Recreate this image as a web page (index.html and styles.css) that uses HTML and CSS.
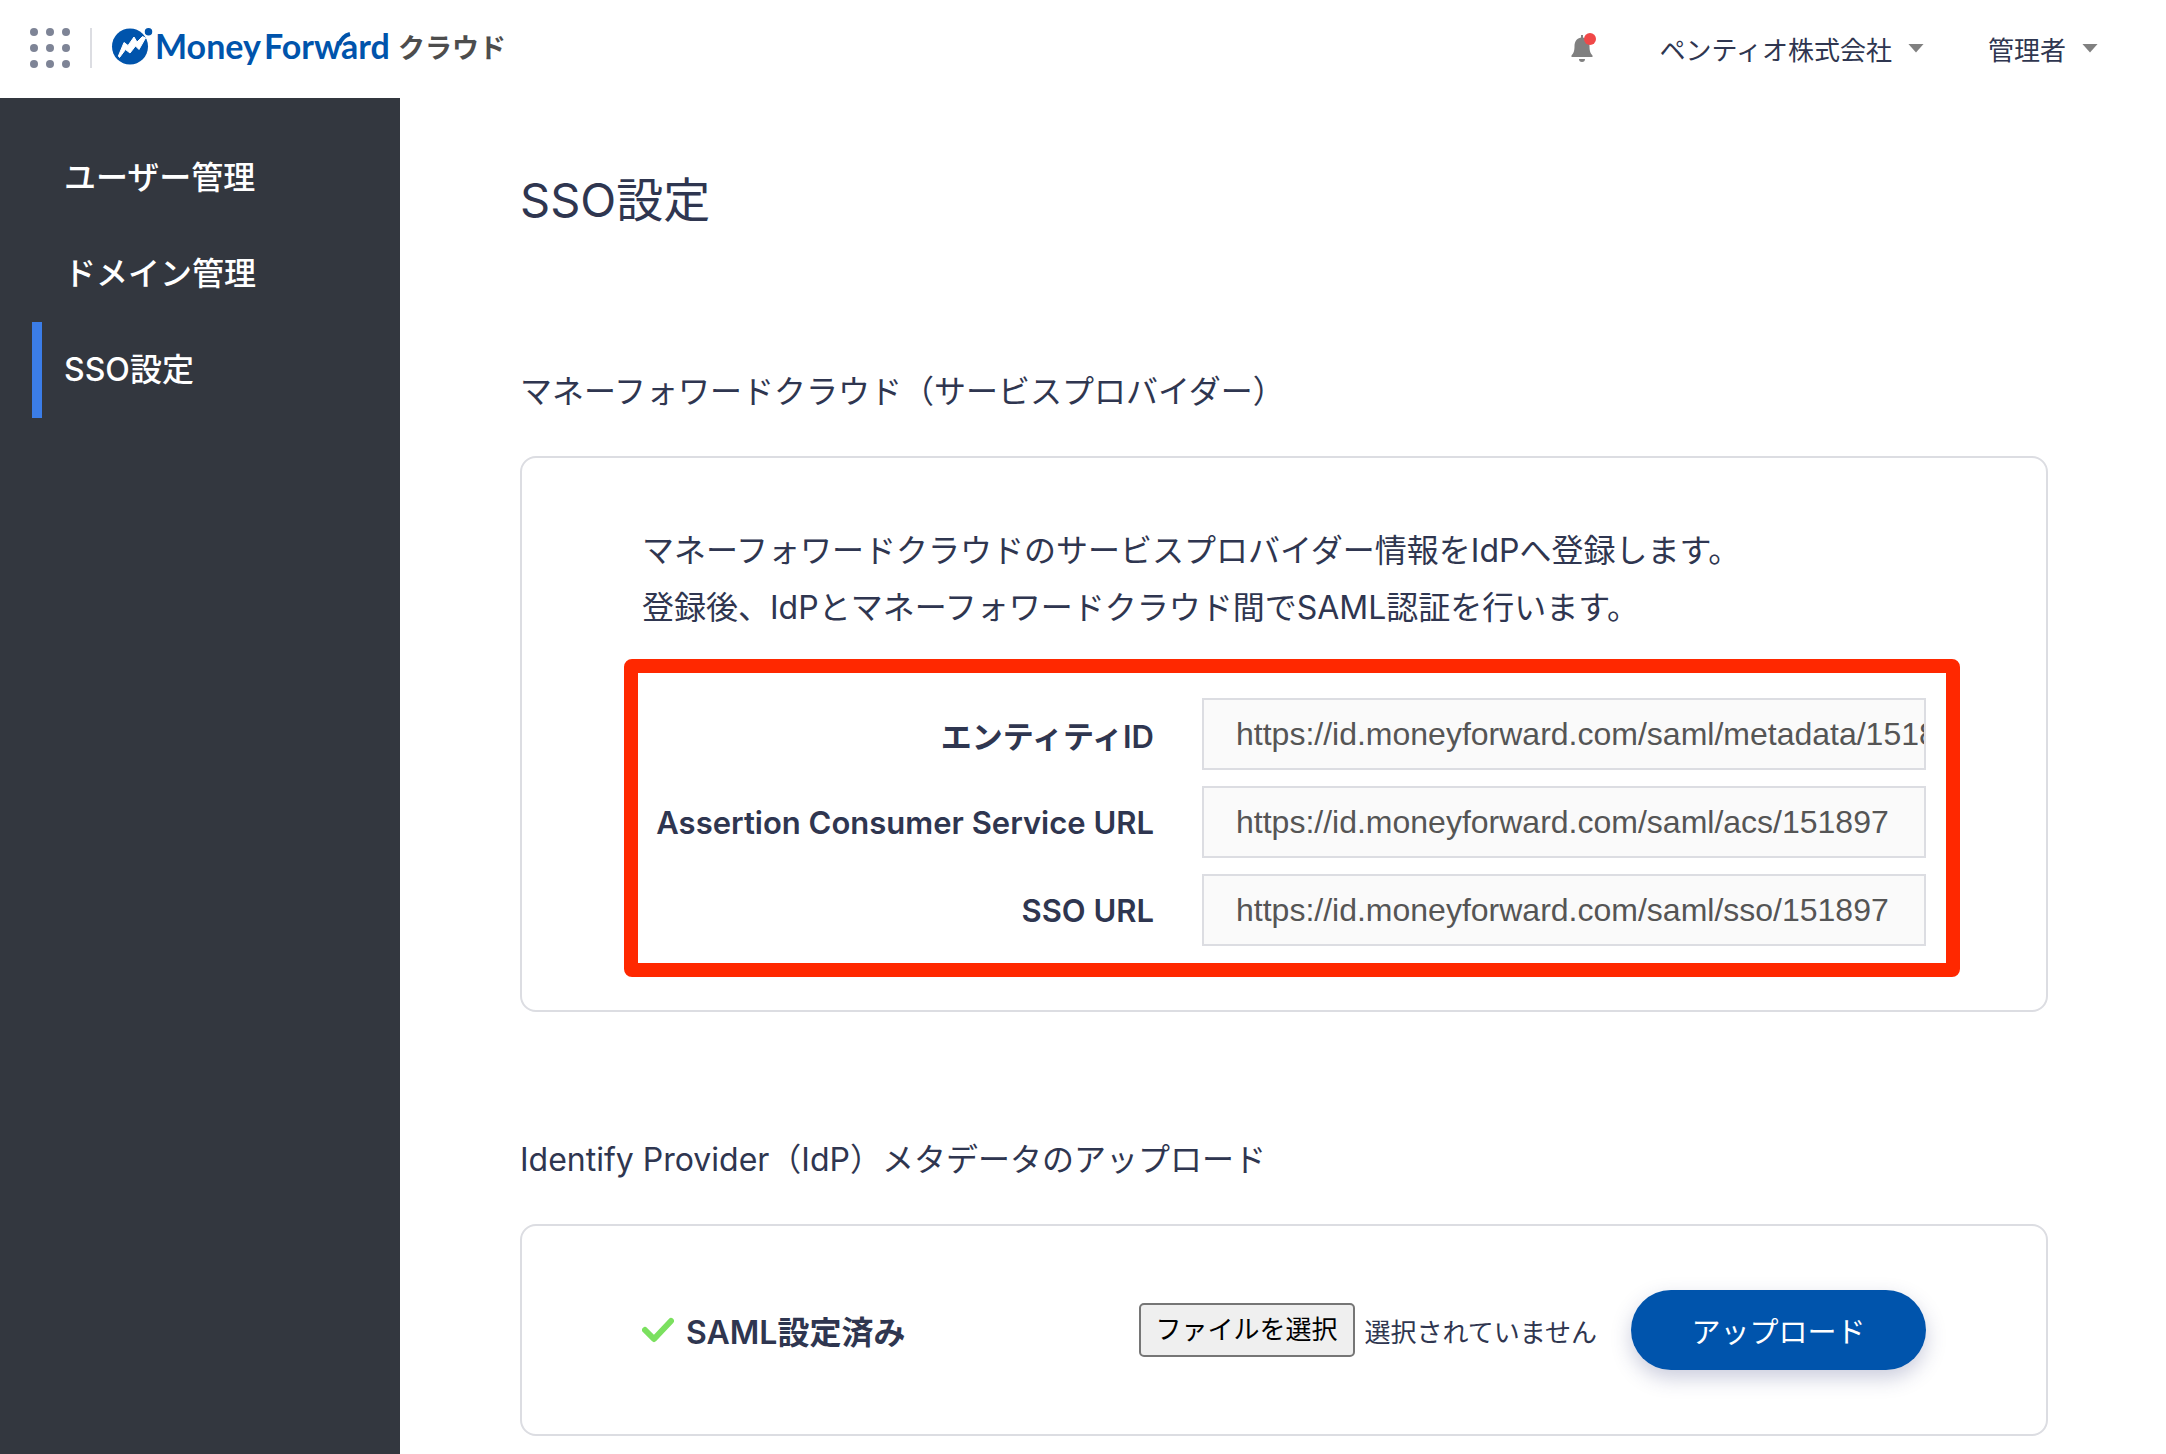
FILE: index.html
```
<!DOCTYPE html>
<html lang="ja">

<head>
  <meta charset="UTF-8">
  <meta name="viewport" content="width=device-width, initial-scale=1.0">
  <title>SSO設定</title>
  <link rel="stylesheet" href="styles.css">
</head>

<body>
  <header class="header">
    <button class="apps" type="button" aria-label="サービス一覧">
      <svg width="40" height="40" viewBox="0 0 40 40" fill="#7e8496">
        <circle cx="4" cy="4" r="4" /><circle cx="20" cy="4" r="4" /><circle cx="36" cy="4" r="4" />
        <circle cx="4" cy="20" r="4" /><circle cx="20" cy="20" r="4" /><circle cx="36" cy="20" r="4" />
        <circle cx="4" cy="36" r="4" /><circle cx="20" cy="36" r="4" /><circle cx="36" cy="36" r="4" />
      </svg>
    </button>
    <a class="logo" href="#">
      <svg width="392" height="40" viewBox="0 0 392 40">
        <circle cx="18" cy="18.500" r="18" fill="#0054ac" />
        <circle cx="36.500" cy="3.700" r="4.500" fill="#0054ac" stroke="#fff" stroke-width="1.500" />
        <path d="M6.400 28 L12 14.500 L16 17.500 L22 9 L25 14 L30.500 8.500 L33.500 10 L27 21.500 L23.500 18 L18 25 L13.500 21.500 L7.500 29.500z" fill="#fff" stroke="#fff" stroke-linejoin="round" />
        <text class="logo__name" x="43" y="31">Money</text>
        <text class="logo__name" x="152" y="31">Forward</text>
        <path d="M227 17 Q230 8 238 6" fill="none" stroke="#0054ac" stroke-width="4" />
        <text class="logo__sub" x="286" y="30">クラウド</text>
      </svg>
    </a>
    <div class="header__right">
      <button class="bell" type="button" aria-label="お知らせ">
        <svg width="26" height="30" viewBox="0 0 26 30">
          <path d="M11 2h2v2.500c4 .8 6.500 4 6.500 8.500 0 5 .8 7 3 9.500v1.500h-21v-1.500c2.200-2.500 3-4.500 3-9.500 0-4.500 2.500-7.700 6.500-8.500z" fill="#808080" />
          <path d="M9 26h6a3 3 0 0 1-6 0z" fill="#808080" />
          <circle cx="20" cy="6" r="6" fill="#f04848" />
        </svg>
      </button>
      <button class="menu" type="button">ペンティオ株式会社<span class="caret"></span></button>
      <button class="menu" type="button">管理者<span class="caret"></span></button>
    </div>
  </header>

  <div class="layout">
    <nav class="sidebar">
      <a class="sidebar__link" href="#">ユーザー管理</a>
      <a class="sidebar__link" href="#">ドメイン管理</a>
      <a class="sidebar__link active" href="#">SSO設定</a>
    </nav>

    <main class="main">
      <h1 class="title">SSO設定</h1>

      <section class="section">
        <h2 class="subtitle">マネーフォワードクラウド（サービスプロバイダー）</h2>
        <div class="card">
          <p class="text">マネーフォワードクラウドのサービスプロバイダー情報をIdPへ登録します。<br>登録後、IdPとマネーフォワードクラウド間でSAML認証を行います。</p>
          <div class="info">
            <label class="info__label" for="entity">エンティティID</label>
            <input class="info__input" id="entity" type="text" value="https://id.moneyforward.com/saml/metadata/151897" readonly>
            <label class="info__label" for="acs">Assertion Consumer Service URL</label>
            <input class="info__input" id="acs" type="text" value="https://id.moneyforward.com/saml/acs/151897" readonly>
            <label class="info__label" for="sso">SSO URL</label>
            <input class="info__input" id="sso" type="text" value="https://id.moneyforward.com/saml/sso/151897" readonly>
          </div>
        </div>
      </section>

      <section class="section">
        <h2 class="subtitle">Identify Provider（IdP）メタデータのアップロード</h2>
        <form class="card upload">
          <p class="status">
            <svg width="32" height="26" viewBox="0 0 32 26" fill="none" stroke="#7be05f" stroke-width="6">
              <path d="M3 13l9 9L29 4" stroke-linecap="round" stroke-linejoin="round" />
            </svg>
            SAML設定済み
          </p>
          <div class="file">
            <input class="file__input" id="file" type="file">
            <label class="file__btn" for="file">ファイルを選択</label>
            <span class="file__name">選択されていません</span>
          </div>
          <button class="submit" type="submit">アップロード</button>
        </form>
      </section>
    </main>
  </div>
</body>

</html>
```

FILE: styles.css
```
* {
  box-sizing: border-box;
}

body {
  display: flex;
  flex-direction: column;
  min-height: 100vh;
  margin: 0;
  color: #2f3650;
  background-color: #fff;
  font-family: Inter, "Noto Sans CJK JP", sans-serif;
  font-size: 32px;
}

h1,
h2,
p {
  margin: 0;
  font-weight: 400;
}

svg {
  display: block;
}

button {
  padding: 0;
  border: none;
  color: inherit;
  background: none;
  font-family: inherit;
  cursor: pointer;
}

/* 头部 */
.header {
  display: flex;
  align-items: center;
  height: 98px;
  padding: 0 68px 2px 30px;
}

.apps {
  margin-right: 20px;
}

.logo {
  padding-left: 20px;
  border-left: 2px solid #dcdde2;
}

.logo svg {
  overflow: visible;
}

.logo__name {
  fill: #0054ac;
  font-family: Lato, sans-serif;
  font-size: 34px;
  font-weight: 700;
}

.logo__sub {
  fill: #4d4d4d;
  font-family: "Noto Sans CJK JP", sans-serif;
  font-size: 27px;
  font-weight: 700;
}

.header__right {
  display: flex;
  align-items: center;
  gap: 64px;
  margin-left: auto;
}

.menu {
  display: flex;
  align-items: center;
  gap: 16px;
  font-size: 26px;
}

.caret {
  width: 16px;
  height: 9px;
  background-color: #808080;
  clip-path: polygon(0 0, 100% 0, 50% 100%);
}

/* 主体 */
.layout {
  display: flex;
  flex: 1;
}

.sidebar {
  flex: none;
  width: 400px;
  padding: 32px 0 0 32px;
  background-color: #33373f;
}

.sidebar__link {
  display: block;
  padding-left: 22px;
  border-left: 10px solid transparent;
  color: #fff;
  font-weight: 500;
  line-height: 96px;
  text-decoration: none;
}

.sidebar__link.active {
  border-color: #3b7de8;
}

.main {
  flex: 1;
  min-width: 0;
  padding: 72px 118px 16px 120px;
}

.title {
  margin-bottom: 138px;
  font-size: 47px;
  line-height: 60px;
}

.section + .section {
  margin-top: 124px;
}

.subtitle {
  margin-bottom: 40px;
  font-size: 32px;
  line-height: 48px;
}

.card {
  padding: 64px 86px 33px 102px;
  border: 2px solid #dcdde2;
  border-radius: 16px;
}

.text {
  padding-left: 18px;
  line-height: 57px;
}

/* 红框 */
.info {
  display: grid;
  grid-template-columns: minmax(0, 1fr) 724px;
  align-items: center;
  gap: 16px 48px;
  margin-top: 23px;
  padding: 25px 20px 17px 14px;
  border: 14px solid #ff2800;
  border-radius: 8px;
}

.info__label {
  font-size: 31px;
  font-weight: 600;
  text-align: right;
  white-space: nowrap;
}

.info__input {
  width: 100%;
  height: 72px;
  padding: 0 0 0 32px;
  border: 2px solid #dcdde2;
  border-radius: 0;
  color: #555;
  background-color: #fafafa;
  font-family: "Liberation Sans", Arial, sans-serif;
  font-size: 32px;
}

.upload {
  display: flex;
  align-items: center;
  padding: 64px 120px;
}

.status {
  display: flex;
  align-items: center;
  gap: 12px;
  margin-right: auto;
  font-weight: 600;
}

.file {
  display: flex;
  align-items: center;
  gap: 10px;
  margin-right: 34px;
  font-size: 26px;
}

.file__input {
  position: absolute;
  width: 1px;
  height: 1px;
  opacity: 0;
}

.file__btn {
  padding: 0 15px;
  border: 2px solid #767676;
  border-radius: 5px;
  color: #000;
  background-color: #efefef;
  line-height: 50px;
}

.submit {
  width: 295px;
  height: 80px;
  border-radius: 40px;
  color: #fff;
  background-color: #0054ac;
  box-shadow: 0 8px 20px rgba(47, 54, 120, .25);
  font-size: 29px;
}
```
